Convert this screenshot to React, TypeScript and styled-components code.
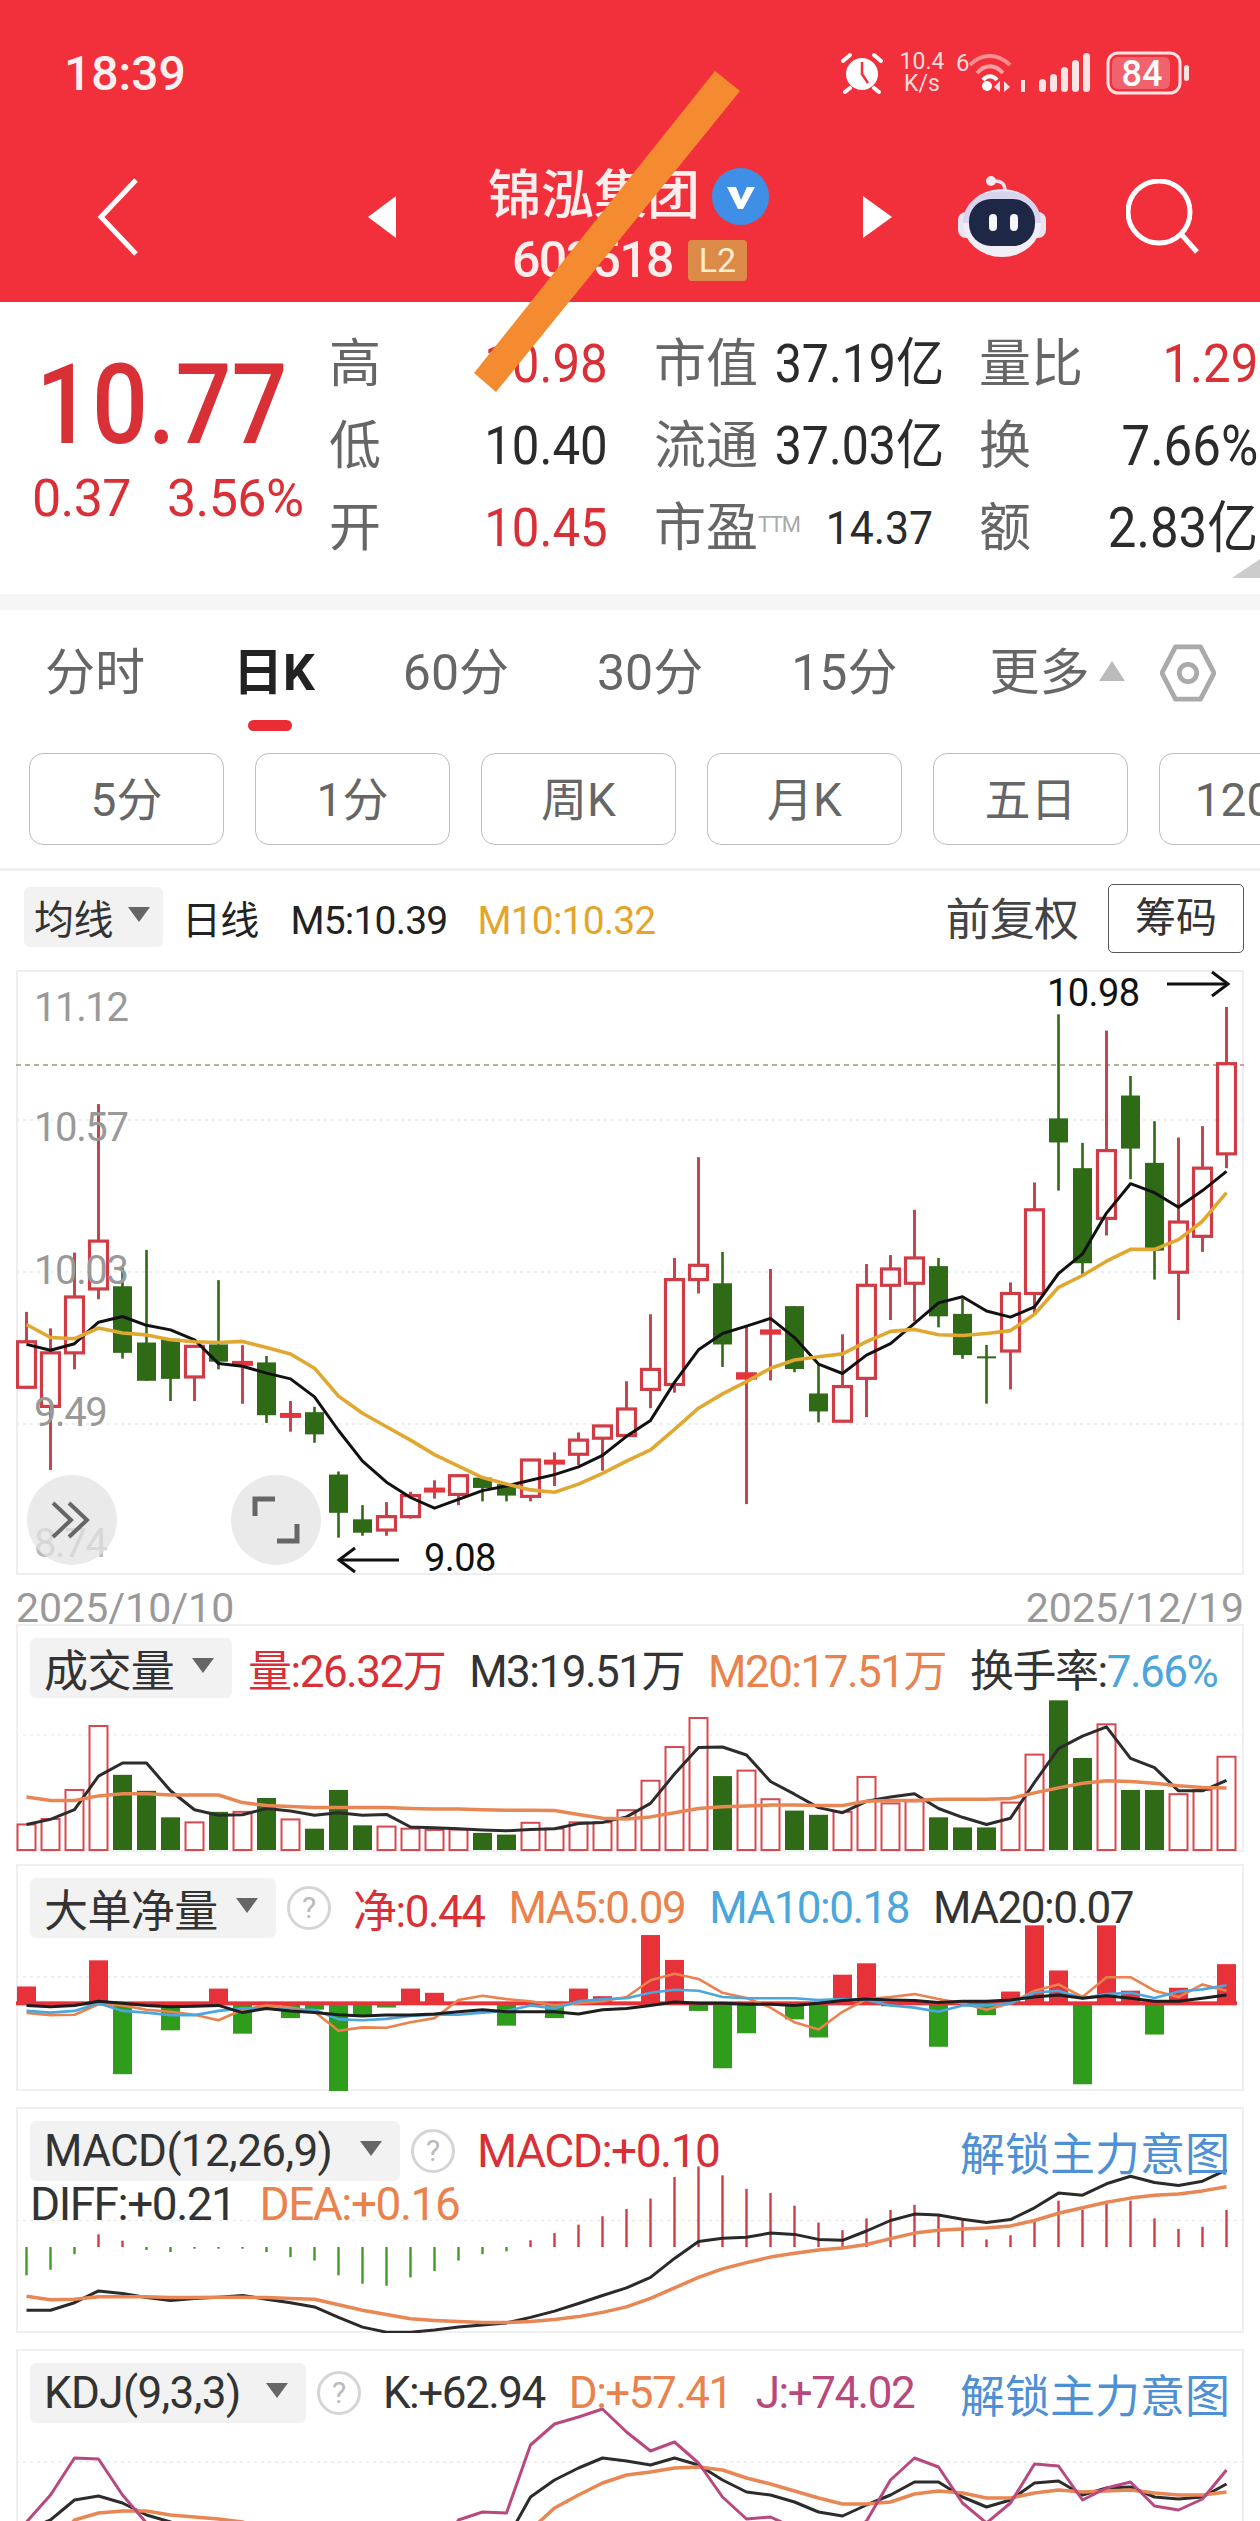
import React from "react";
import styled, { createGlobalStyle } from "styled-components";

const GlobalStyle = createGlobalStyle`
  html, body { margin: 0; padding: 0; background: #fff; }
  body { font-family: Roboto, "Noto Sans CJK SC", sans-serif; }
`;

const RED = "#d92f36";
const ORANGE = "#e9824c";
const BLUE = "#4aa6dc";
const PINK = "#b9487f";
const CANDLE_RED = "#d03c45";
const WICK_RED = "#c4454d";
const GREEN = "#2f6a17";

const colX = (i: number) => 26.5 + 24 * i;

type Kind = "up" | "flat" | "down";
type Candle = [number, number, number, number, Kind];

// sampled from the picture, left part and right part were read at different scales
const leftY = (v: number) => 1000 + v / 2.613;
const rightY = (v: number) => 960 + v / 2.45;
const volY = (v: number) => 1210 + v / 2.376;
const lowY = (v: number) => 1860 + v / 2.372;

const candlesLeft: Candle[] = [
  [893, 1012, 815, 1015, "up"],
  [922, 1062, 858, 1228, "up"],
  [776, 922, 660, 965, "up"],
  [630, 755, 272, 782, "up"],
  [748, 922, 700, 937, "down"],
  [895, 995, 653, 995, "down"],
  [885, 990, 885, 1048, "down"],
  [905, 985, 905, 1048, "up"],
  [900, 945, 732, 965, "down"],
  [943, 951, 902, 1055, "flat"],
  [947, 1085, 930, 1105, "down"],
  [1079, 1087, 1048, 1128, "flat"],
  [1077, 1135, 1063, 1157, "down"],
  [1240, 1340, 1232, 1405, "down"],
  [1357, 1392, 1320, 1400, "down"],
  [1350, 1385, 1312, 1400, "up"],
  [1295, 1350, 1285, 1355, "up"],
  [1274, 1282, 1255, 1303, "flat"],
  [1243, 1292, 1240, 1320, "up"],
  [1248, 1275, 1248, 1310, "down"],
  [1265, 1295, 1262, 1310, "down"],
  [1202, 1297, 1200, 1310, "up"],
  [1201, 1209, 1182, 1270, "flat"],
  [1150, 1187, 1130, 1215, "up"],
  [1113, 1145, 1113, 1230, "up"],
];

const candlesRight: Candle[] = [
  [1100, 1165, 1032, 1170, "up"],
  [1003, 1052, 868, 1098, "up"],
  [783, 1040, 730, 1060, "up"],
  [748, 783, 483, 817, "up"],
  [792, 942, 715, 997, "down"],
  [1010, 1028, 895, 1333, "flat"],
  [905, 918, 757, 1030, "flat"],
  [848, 1002, 848, 1010, "down"],
  [1062, 1106, 990, 1133, "down"],
  [1045, 1130, 917, 1130, "up"],
  [797, 1025, 745, 1120, "up"],
  [757, 797, 723, 882, "up"],
  [730, 792, 612, 885, "up"],
  [750, 873, 730, 900, "down"],
  [867, 968, 830, 977, "down"],
  [971, 976, 943, 1087, "down"],
  [817, 958, 790, 1052, "up"],
  [612, 817, 545, 865, "up"],
  [388, 447, 133, 565, "down"],
  [510, 743, 448, 770, "down"],
  [467, 633, 173, 675, "up"],
  [332, 462, 284, 537, "down"],
  [497, 712, 395, 783, "down"],
  [642, 765, 435, 882, "up"],
  [510, 677, 407, 715, "up"],
  [254, 475, 115, 510, "up"],
];

const candles: Candle[] = [
  ...candlesLeft.map((c) => [leftY(c[0]), leftY(c[1]), leftY(c[2]), leftY(c[3]), c[4]] as Candle),
  ...candlesRight.map((c) => [rightY(c[0]), rightY(c[1]), rightY(c[2]), rightY(c[3]), c[4]] as Candle),
];

const ma5 = [
  ...[900, 915, 898, 842, 827, 850, 862, 888, 950, 957, 975, 990, 1037, 1125, 1205, 1260, 1300, 1328, 1305, 1282, 1270, 1255, 1240, 1220, 1190, 1140].map(leftY),
  ...[1128, 1035, 955, 915, 897, 878, 925, 990, 1013, 968, 940, 890, 840, 825, 860, 875, 850, 768, 720, 620, 548, 570, 606, 565, 518].map(rightY),
];

const ma10 = [
  ...[848, 882, 885, 857, 870, 875, 888, 893, 895, 892, 908, 925, 962, 1035, 1080, 1115, 1150, 1188, 1218, 1248, 1265, 1280, 1286, 1265, 1237, 1205].map(leftY),
  ...[1200, 1150, 1098, 1063, 1033, 1000, 980, 972, 965, 935, 910, 905, 918, 920, 915, 908, 868, 802, 773, 738, 709, 709, 685, 640, 570].map(rightY),
];

const volumes = [1460, 1447, 1378, 1226, 1342, 1380, 1443, 1455, 1430, 1430, 1397, 1448, 1470, 1378, 1462, 1465, 1470, 1473, 1472, 1480, 1484, 1456, 1470, 1455, 1455, 1426, 1356, 1276, 1207, 1345, 1332, 1400, 1427, 1437, 1430, 1347, 1410, 1405, 1443, 1467, 1467, 1408, 1294, 1165, 1302, 1222, 1378, 1378, 1388, 1378, 1299].map(volY);
const volM3 = [1460, 1448, 1425, 1345, 1314, 1314, 1380, 1425, 1438, 1437, 1422, 1428, 1438, 1432, 1438, 1436, 1466, 1468, 1470, 1473, 1475, 1472, 1470, 1458, 1455, 1442, 1410, 1340, 1277, 1276, 1295, 1358, 1388, 1420, 1432, 1405, 1395, 1387, 1422, 1443, 1460, 1445, 1360, 1280, 1250, 1228, 1303, 1325, 1380, 1380, 1355].map(volY);
const volM20 = [1395, 1403, 1403, 1392, 1387, 1387, 1390, 1390, 1390, 1408, 1415, 1417, 1420, 1420, 1420, 1420, 1422, 1423, 1423, 1425, 1426, 1426, 1427, 1436, 1445, 1447, 1442, 1432, 1422, 1418, 1416, 1414, 1414, 1415, 1415, 1405, 1403, 1403, 1400, 1400, 1400, 1398, 1385, 1373, 1362, 1356, 1358, 1362, 1368, 1372, 1373].map(volY);

const BIG_BASE = lowY(340);
const bigBars: Record<number, number> = {
  0: 300, 3: 238, 8: 305, 16: 305, 17: 315, 23: 305, 24: 323, 26: 178, 27: 237, 34: 272, 35: 245, 41: 312, 42: 155, 43: 262, 45: 155, 46: 310, 48: 303, 50: 247,
  4: 508, 6: 404, 9: 412, 10: 345, 11: 375, 12: 355, 13: 548, 14: 370, 15: 350, 20: 393, 22: 375, 28: 358, 29: 494, 30: 411, 32: 378, 33: 421, 36: 347, 38: 443, 40: 368, 44: 532, 47: 414,
};
const bigMa5 = [363, 368, 367, 342, 345, 355, 360, 367, 380, 355, 345, 350, 360, 405, 397, 398, 385, 375, 332, 322, 330, 335, 345, 340, 335, 325, 285, 270, 282, 315, 327, 350, 385, 402, 360, 330, 325, 318, 330, 340, 355, 340, 310, 295, 325, 278, 278, 310, 325, 295, 310].map(lowY);
const bigMa10 = [358, 362, 358, 340, 358, 362, 368, 368, 358, 352, 352, 355, 355, 378, 380, 377, 370, 367, 367, 362, 358, 345, 352, 335, 330, 328, 315, 308, 310, 325, 328, 328, 328, 332, 330, 332, 345, 350, 360, 345, 345, 340, 315, 310, 328, 318, 315, 327, 312, 307, 297].map(lowY);
const bigMa20 = [345, 348, 345, 335, 340, 345, 348, 347, 345, 362, 352, 358, 362, 367, 370, 368, 368, 365, 360, 355, 360, 360, 360, 365, 355, 352, 345, 337, 340, 340, 342, 342, 345, 340, 333, 330, 332, 333, 338, 335, 335, 332, 325, 320, 328, 322, 328, 335, 335, 328, 320].map(lowY);

const MACD_BASE = 918;
const macdBars = [985, 972, 935, 888, 903, 925, 930, 922, 922, 922, 930, 942, 950, 985, 1005, 1010, 990, 975, 950, 935, 928, 902, 885, 865, 845, 828, 803, 752, 727, 748, 780, 790, 820, 860, 878, 850, 830, 818, 840, 850, 900, 890, 855, 808, 830, 815, 808, 850, 875, 870, 830];
const diff = [1068, 1068, 1050, 1022, 1028, 1038, 1045, 1040, 1037, 1033, 1042, 1050, 1060, 1085, 1108, 1120, 1120, 1115, 1108, 1103, 1098, 1085, 1070, 1052, 1033, 1015, 990, 945, 905, 897, 895, 885, 888, 900, 902, 880, 855, 840, 842, 852, 860, 853, 825, 790, 795, 768, 750, 765, 772, 762, 735].map(lowY);
const dea = [1035, 1043, 1042, 1036, 1036, 1036, 1038, 1038, 1037, 1037, 1038, 1040, 1042, 1055, 1068, 1078, 1088, 1092, 1095, 1097, 1097, 1095, 1090, 1083, 1073, 1060, 1040, 1015, 990, 970, 955, 942, 933, 925, 920, 912, 898, 885, 878, 875, 873, 868, 855, 838, 825, 812, 802, 795, 792, 785, 775].map(lowY);

// below the fold the lines only have to leave the page, so those values are rough
const kdjK = [2530, 2520, 2500, 2496, 2503, 2515, 2522, 2530, 2540, 2550, 2560, 2570, 2570, 2570, 2570, 2570, 2570, 2570, 2570, 2560, 2540, 2497, 2480, 2468, 2458, 2461, 2465, 2458, 2465, 2480, 2492, 2495, 2502, 2512, 2516, 2505, 2495, 2482, 2482, 2497, 2507, 2500, 2483, 2481, 2495, 2488, 2487, 2497, 2499, 2497, 2484];
const kdjD = [2560, 2550, 2520, 2513, 2511, 2511, 2515, 2517, 2519, 2522, 2530, 2540, 2550, 2560, 2570, 2570, 2570, 2570, 2570, 2570, 2550, 2530, 2508, 2495, 2483, 2475, 2472, 2468, 2467, 2470, 2478, 2484, 2491, 2498, 2504, 2504, 2502, 2494, 2491, 2493, 2498, 2498, 2493, 2490, 2492, 2491, 2490, 2493, 2495, 2495, 2492];
const kdjJ = [2522, 2495, 2458, 2459, 2495, 2523, 2560, 2580, 2590, 2590, 2590, 2590, 2590, 2590, 2590, 2590, 2590, 2560, 2520, 2512, 2513, 2445, 2424, 2417, 2409, 2432, 2451, 2442, 2463, 2497, 2519, 2517, 2528, 2540, 2540, 2521, 2480, 2458, 2467, 2503, 2523, 2503, 2464, 2466, 2500, 2488, 2482, 2506, 2510, 2499, 2470];

const linePoints = (ys: number[]) => ys.map((y, i) => `${colX(i)},${y.toFixed(1)}`).join(" ");

const Page = styled.div`
  position: relative;
  width: 1260px;
  height: 2521px;
  overflow: hidden;
  background: #fff;
  color: #333;
`;

const Stripe = styled.svg`
  position: absolute;
  left: 0;
  top: 0;
  z-index: 5;
`;

const Header = styled.header`
  height: 302px;
  background: #f1303c;
  color: #fff;
`;

const StatusBar = styled.div`
  height: 146px;
  box-sizing: border-box;
  padding: 0 0 0 64px;
  display: flex;
  align-items: center;
`;

const Clock = styled.span`
  font-size: 48px;
  font-weight: 500;
  width: 776px;
  color: #fdf0f0;
`;

const StatusIcon = styled.svg<{ $ml?: number }>`
  flex: none;
  margin-left: ${(p) => p.$ml ?? 0}px;
`;

const Speed = styled.span`
  display: flex;
  flex-direction: column;
  align-items: center;
  width: 52px;
  margin-left: 12px;
  font-size: 23px;
  line-height: 22px;
  color: #fbdcdc;
`;

const NetworkDigit = styled.span`
  width: 12px;
  margin: 0 0 20px 8px;
  font-size: 24px;
  line-height: 24px;
  color: #fbdcdc;
`;

const NavBar = styled.div`
  height: 156px;
  padding-left: 96px;
  display: flex;
  align-items: center;
`;

const NavIcon = styled.svg<{ $ml: number }>`
  margin-left: ${(p) => p.$ml}px;
  margin-bottom: 14px;
  flex: none;
`;

const TitleBlock = styled.div`
  width: 281px;
  margin-left: 94px;
  flex: none;
`;

const TitleRow = styled.div`
  display: flex;
  align-items: center;
  height: 66px;
`;

const StockName = styled.span`
  font-size: 53px;
  font-weight: 500;
  line-height: 66px;
  width: 224px;
  margin-left: -2px;
  color: #fdeeee;
`;

const CodeRow = styled.div`
  display: flex;
  align-items: center;
  margin-top: 6px;
  padding-left: 22px;
`;

const StockCode = styled.span`
  font-size: 50px;
  font-weight: 500;
  letter-spacing: -1.6px;
  line-height: 50px;
  color: #fdeeee;
  width: 176px;
`;

const LevelBadge = styled.span`
  width: 59px;
  height: 41px;
  background: #dc8a48;
  color: #ffeccd;
  border-radius: 4px;
  font-size: 34px;
  line-height: 41px;
  text-align: center;
`;

const Quote = styled.section`
  height: 292px;
  display: flex;
  box-sizing: border-box;
  padding-top: 21px;
`;

const PriceBlock = styled.div`
  width: 330px;
  flex: none;
  padding-left: 32px;
  box-sizing: border-box;
`;

const Price = styled.div`
  font-size: 112px;
  font-weight: 500;
  line-height: 112px;
  color: ${RED};
  margin: 26px 0 0 4px;
  transform: scaleX(0.88);
  transform-origin: left center;
`;

const PriceChange = styled.div`
  display: flex;
  gap: 36px;
  margin-top: 10px;
  font-size: 52px;
  line-height: 56px;
  letter-spacing: -0.6px;
  color: ${RED};
  white-space: nowrap;
`;

const QuoteGrid = styled.div`
  display: grid;
  grid-template-columns: repeat(3, 278px);
  grid-auto-rows: 82px;
  column-gap: 47px;
`;

const QuoteCell = styled.div`
  display: flex;
  align-items: center;
  justify-content: space-between;
  white-space: nowrap;
`;

const QuoteLabel = styled.span`
  font-size: 52px;
  line-height: 60px;
  margin: 2px 0 0 -1px;
  color: #666;
  display: inline-flex;
  align-items: flex-start;
`;

const Ttm = styled.span`
  font-size: 22px;
  line-height: 28px;
  margin-top: 12px;
  color: #aaa;
  letter-spacing: -1.4px;
`;

const QuoteValue = styled.span<{ $red?: boolean; $size?: number; $mr?: number }>`
  display: inline-block;
  font-size: ${(p) => p.$size ?? 54}px;
  line-height: 60px;
  margin-right: ${(p) => p.$mr ?? 0}px;
  transform: scaleX(0.91);
  transform-origin: right center;
  color: ${(p) => (p.$red ? RED : "#2b2b2b")};
`;

const Corner = styled.div`
  position: absolute;
  right: 0;
  top: 559px;
  width: 0;
  height: 0;
  border-left: 28px solid transparent;
  border-bottom: 19px solid #ccc;
`;

const Band = styled.div`
  height: 16px;
  background: #f5f5f5;
`;

const TabRow = styled.nav`
  position: relative;
  height: 143px;
  box-sizing: border-box;
  padding: 36px 0 0 45px;
  display: flex;
  align-items: flex-start;
  gap: 88px;
`;

const Tab = styled.span<{ $active?: boolean; $ml?: number }>`
  position: relative;
  font-size: 50px;
  line-height: 54px;
  white-space: nowrap;
  color: ${(p) => (p.$active ? "#222" : "#666")};
  font-weight: ${(p) => (p.$active ? 700 : 400)};
  margin-left: ${(p) => p.$ml ?? 0}px;
  display: flex;
  align-items: center;
`;

const TabMark = styled.i`
  position: absolute;
  left: 15px;
  top: 74px;
  width: 44px;
  height: 11px;
  border-radius: 6px;
  background: #ea2c35;
`;

const TabArrow = styled.i`
  width: 0;
  height: 0;
  margin: 0 0 4px 10px;
  border-left: 13px solid transparent;
  border-right: 13px solid transparent;
  border-bottom: 20px solid #bbb;
`;

const SettingsIcon = styled.svg`
  flex: none;
  margin: -3px 0 0 -53px;
`;

const PeriodRow = styled.div`
  height: 115px;
  padding-left: 29px;
  display: flex;
  gap: 31px;
  overflow: hidden;
  border-bottom: 3px solid #efefef;
`;

const PeriodButton = styled.span`
  flex: none;
  width: 195px;
  height: 92px;
  box-sizing: border-box;
  border: 1px solid #bdbdbd;
  border-radius: 14px;
  font-size: 46px;
  line-height: 92px;
  text-align: center;
  color: #666;
`;

const ChartHead = styled.div`
  height: 99px;
  box-sizing: border-box;
  padding: 16px 16px 0 24px;
  display: flex;
  align-items: flex-start;
`;

const HeadText = styled.span<{ $color?: string; $size?: number; $ml?: number }>`
  font-size: ${(p) => p.$size ?? 39}px;
  line-height: 68px;
  letter-spacing: -0.8px;
  color: ${(p) => p.$color ?? "#222"};
  margin-left: ${(p) => p.$ml ?? 0}px;
  white-space: nowrap;
`;

const Pill = styled.span<{ $w: number; $compact?: boolean }>`
  flex: none;
  box-sizing: border-box;
  width: ${(p) => p.$w}px;
  height: 60px;
  padding-left: ${(p) => (p.$compact ? 10 : 14)}px;
  padding-right: ${(p) => (p.$compact ? 13 : 18)}px;
  border-radius: 6px;
  background: #f2f2f2;
  display: flex;
  align-items: center;
  justify-content: space-between;
  font-size: ${(p) => (p.$compact ? 40 : 44)}px;
  letter-spacing: -0.6px;
  color: #333;
  white-space: nowrap;
`;

const PillArrow = styled.i`
  flex: none;
  width: 0;
  height: 0;
  margin-bottom: 6px;
  border-left: 11px solid transparent;
  border-right: 11px solid transparent;
  border-top: 15px solid #666;
`;

const ChipButton = styled.span`
  margin-left: auto;
  margin-top: -3px;
  width: 136px;
  height: 69px;
  box-sizing: border-box;
  border: 1px solid #555;
  border-radius: 5px;
  font-size: 41px;
  line-height: 66px;
  text-align: center;
  color: #333;
`;

const PricePanel = styled.section`
  position: relative;
  width: 1228px;
  height: 605px;
  margin-left: 16px;
  box-sizing: border-box;
  border: 2px solid #eeeeee;
`;

const PanelChart = styled.svg`
  position: absolute;
  left: -2px;
  top: -2px;
  overflow: hidden;
`;

const AxisLabel = styled.span<{ $top: number; $faded?: boolean }>`
  position: absolute;
  left: 16px;
  top: ${(p) => p.$top}px;
  font-size: 40px;
  line-height: 46px;
  letter-spacing: -1.4px;
  color: ${(p) => (p.$faded ? "#bbb" : "#999")};
`;

const Note = styled.span<{ $left: number; $top: number }>`
  position: absolute;
  left: ${(p) => p.$left}px;
  top: ${(p) => p.$top}px;
  font-size: 38px;
  line-height: 42px;
  letter-spacing: -0.6px;
  color: #111;
`;

const RoundButton = styled.span<{ $left: number }>`
  position: absolute;
  left: ${(p) => p.$left}px;
  top: 503px;
  width: 90px;
  height: 90px;
  border-radius: 50%;
  background: rgba(226, 226, 226, 0.72);
  display: flex;
  align-items: center;
  justify-content: center;
`;

const DateRow = styled.div`
  height: 49px;
  box-sizing: border-box;
  padding-top: 16px;
  width: 1228px;
  margin-left: 16px;
  display: flex;
  justify-content: space-between;
  align-items: center;
  font-size: 41px;
  color: #999;
`;

const Panel = styled.section<{ $h: number; $mb?: number }>`
  position: relative;
  width: 1228px;
  height: ${(p) => p.$h}px;
  margin: 0 0 ${(p) => p.$mb ?? 16}px 16px;
  box-sizing: border-box;
  border: 2px solid #f0f0f0;
  padding: 12px 12px 0 12px;
`;

const Legend = styled.div`
  position: relative;
  display: flex;
  align-items: center;
  height: 60px;
  gap: 24px;
`;

const LegendItem = styled.span<{ $color?: string; $size?: number; $ml?: number }>`
  font-size: ${(p) => p.$size ?? 44}px;
  letter-spacing: -1.5px;
  color: ${(p) => p.$color ?? "#333"};
  margin-left: ${(p) => p.$ml ?? 0}px;
  white-space: nowrap;
`;

const Rate = styled.span`
  color: ${BLUE};
`;

const LegendLink = styled.span`
  margin-left: auto;
  font-size: 45px;
  color: #4d90d6;
  white-space: nowrap;
`;

const Help = styled.span`
  flex: none;
  width: 44px;
  height: 44px;
  box-sizing: border-box;
  margin-left: -13px;
  margin-right: -2px;
  border: 3px solid #d5d5d5;
  border-radius: 50%;
  font-size: 30px;
  line-height: 38px;
  text-align: center;
  color: #bbb;
`;

const SubLegend = styled.div`
  position: relative;
  display: flex;
  gap: 24px;
  margin-top: 1px;
  height: 44px;
  line-height: 44px;
`;

const AlarmIcon = () => (
  <StatusIcon width="44" height="42" viewBox="0 0 44 42">
    <circle cx="22" cy="22" r="16" fill="#fff" />
    <path d="M22 10v12l6 9" stroke="#f1303c" strokeWidth="2.5" fill="none" />
    <path d="M3 9l7-6M41 9l-7-6" stroke="#fff" strokeWidth="4" strokeLinecap="round" />
    <path d="M10 36l-5 4M34 36l5 4" stroke="#fff" strokeWidth="4" strokeLinecap="round" />
  </StatusIcon>
);

const WifiIcon = () => (
  <StatusIcon width="44" height="40" viewBox="0 0 44 40">
    <path d="M2 12C13 0 30 0 42 12" stroke="#ff8e90" strokeWidth="4" fill="none" />
    <path d="M9 20C17 11 27 11 35 20" stroke="#ff9ea0" strokeWidth="4" fill="none" />
    <path d="M15 27C19 22 25 22 29 27" stroke="#fff" strokeWidth="4" fill="none" />
    <circle cx="19" cy="33" r="5" fill="#fff" />
    <path d="M32 28l-6 6 6 5zM36 28l6 6-6 5z" fill="#fde0e0" />
  </StatusIcon>
);

const SignalIcon = () => (
  <StatusIcon $ml={6} width="72" height="42" viewBox="0 0 72 42">
    <rect x="3" y="28" width="4" height="12" fill="#fbe4e4" />
    <rect x="21" y="27" width="7" height="13" rx="3.5" fill="#fbe4e4" />
    <rect x="32" y="22" width="7" height="18" rx="3.5" fill="#fbe4e4" />
    <rect x="43" y="15" width="7" height="25" rx="3.5" fill="#fbe4e4" />
    <rect x="54" y="8" width="7" height="32" rx="3.5" fill="#fbe4e4" />
    <rect x="65" y="1" width="7" height="39" rx="3.5" fill="#fbe4e4" />
  </StatusIcon>
);

const BatteryIcon = () => (
  <StatusIcon $ml={16} width="84" height="44" viewBox="0 0 84 44">
    <rect x="2" y="2" width="72" height="40" rx="10" fill="none" stroke="#fde2e2" strokeWidth="3" />
    <rect x="6" y="6" width="58" height="32" rx="6" fill="#f0626c" />
    <rect x="78" y="14" width="5" height="16" rx="2.5" fill="#fde2e2" />
    <text x="36" y="35" textAnchor="middle" fontSize="36" fontWeight="500" fill="#fff" fontFamily="Roboto, sans-serif">84</text>
  </StatusIcon>
);

const RobotIcon = () => (
  <NavIcon $ml={66} width="88" height="82" viewBox="0 0 88 82">
    <path d="M47 15c0-7-3-10-10-10" stroke="#ecdfee" strokeWidth="3.5" fill="none" />
    <circle cx="33" cy="5" r="5" fill="#f3e9f2" />
    <rect x="0" y="36" width="88" height="26" rx="8" fill="#e9e4f4" />
    <ellipse cx="44" cy="47" rx="39" ry="34" fill="#f2eef8" />
    <path d="M5 47C5 28 20 15 44 15s39 13 39 32" fill="#d8d4ee" />
    <rect x="11" y="23" width="66" height="47" rx="22" fill="#1f2747" />
    <rect x="31" y="38" width="8" height="17" rx="4" fill="#f6f6fb" />
    <rect x="52" y="38" width="8" height="17" rx="4" fill="#f6f6fb" />
  </NavIcon>
);

const CandleShape = ({ c, i }: { c: Candle; i: number }) => {
  const [top, bottom, wickTop, wickBottom, kind] = c;
  const x = colX(i);
  if (kind === "down") {
    return (
      <g>
        <line x1={x} x2={x} y1={wickTop} y2={wickBottom} stroke={GREEN} strokeWidth="2.6" />
        <rect x={x - 9.5} y={top} width="19" height={bottom - top} fill={GREEN} />
      </g>
    );
  }
  if (kind === "flat") {
    return (
      <g>
        <line x1={x} x2={x} y1={wickTop} y2={wickBottom} stroke={WICK_RED} strokeWidth="3" />
        <rect x={x - 10.5} y={top} width="21" height={Math.max(bottom - top, 5)} fill="#e4343c" />
      </g>
    );
  }
  return (
    <g>
      <line x1={x} x2={x} y1={wickTop} y2={top} stroke={WICK_RED} strokeWidth="3" />
      <line x1={x} x2={x} y1={bottom} y2={wickBottom} stroke={WICK_RED} strokeWidth="3" />
      <rect x={x - 9} y={top} width="18" height={bottom - top} fill="#fff" fillOpacity="0.6" stroke={CANDLE_RED} strokeWidth="3.2" />
    </g>
  );
};

const Series = ({ ys, color, width = 2.6 }: { ys: number[]; color: string; width?: number }) => (
  <polyline points={linePoints(ys)} fill="none" stroke={color} strokeWidth={width} strokeLinejoin="round" />
);

const GridLine = ({ y, from = 16, to = 1244, dark }: { y: number; from?: number; to?: number; dark?: boolean }) => (
  <line
    x1={from}
    x2={to}
    y1={y}
    y2={y}
    stroke={dark ? "#b3b09c" : "#e9e9e9"}
    strokeWidth={dark ? 2 : 1.5}
    strokeDasharray={dark ? "5 4" : "3 4"}
  />
);

const ViewChart = ({ top, h, children }: { top: number; h: number; children: React.ReactNode }) => (
  <PanelChart width="1228" height={h} viewBox={`16 ${top} 1228 ${h}`}>
    {children}
  </PanelChart>
);

const arrowHead = "M-16 -12L0 0L-16 12";

const CandleChart = () => (
  <ViewChart top={970} h={605}>
    <GridLine y={1065} dark />
    <GridLine y={1120} />
    <GridLine y={1272} />
    <GridLine y={1424} />
    {candles.map((c, i) => (
      <CandleShape key={i} c={c} i={i} />
    ))}
    <Series ys={ma5} color="#111" width={3} />
    <Series ys={ma10} color="#e0a830" width={3.6} />
    <line x1="1167" x2="1226" y1="984" y2="984" stroke="#111" strokeWidth="3" />
    <path d={arrowHead} transform="translate(1228 984)" fill="none" stroke="#111" strokeWidth="3" />
    <line x1="341" x2="399" y1="1560" y2="1560" stroke="#111" strokeWidth="3" />
    <path d={arrowHead} transform="translate(339 1560) rotate(180)" fill="none" stroke="#111" strokeWidth="3" />
  </ViewChart>
);

const VolumeChart = () => (
  <ViewChart top={1624} h={228}>
    <line x1="16" x2="1244" y1="1735" y2="1735" stroke="#efefef" strokeWidth="1.5" strokeDasharray="3 4" />
    {volumes.map((y, i) =>
      candles[i][4] === "down" ? (
        <rect key={i} x={colX(i) - 9.5} y={y} width="19" height={1850 - y} fill={GREEN} />
      ) : (
        <rect key={i} x={colX(i) - 9} y={y} width="18" height={1850 - y} fill="#fff" stroke="#d8484f" strokeWidth="2" />
      )
    )}
    <Series ys={volM3} color="#2c2c2c" width={3} />
    <Series ys={volM20} color="#e88654" width={3.5} />
  </ViewChart>
);

const BigOrderChart = () => (
  <ViewChart top={1864} h={227}>
    <GridLine y={1977} />
    {Object.entries(bigBars).map(([i, raw]) => {
      const y = lowY(raw);
      const up = y < BIG_BASE;
      return (
        <rect
          key={i}
          x={colX(Number(i)) - 9.5}
          y={up ? y : BIG_BASE}
          width="19"
          height={Math.abs(y - BIG_BASE)}
          fill={up ? "#e8323a" : "#2f9c1c"}
        />
      );
    })}
    <rect x="16" y={BIG_BASE - 2} width="1221" height="4" fill="#e8323a" />
    <Series ys={bigMa5} color={ORANGE} />
    <Series ys={bigMa10} color={BLUE} />
    <Series ys={bigMa20} color="#1e1e1e" width={3} />
  </ViewChart>
);

const MacdChart = () => (
  <ViewChart top={2107} h={226}>
    <GridLine y={lowY(855)} />
    {macdBars.map((raw, i) => (
      <line
        key={i}
        x1={colX(i)}
        x2={colX(i)}
        y1={lowY(MACD_BASE)}
        y2={lowY(raw)}
        stroke={raw < MACD_BASE ? "#d23c44" : "#3f9a24"}
        strokeWidth="2.4"
      />
    ))}
    <Series ys={diff} color="#2a2a2a" width={3} />
    <Series ys={dea} color="#e88654" width={3.5} />
  </ViewChart>
);

const KdjChart = () => (
  <ViewChart top={2349} h={172}>
    <GridLine y={2462} />
    <Series ys={kdjK} color="#2c2c2c" width={3} />
    <Series ys={kdjD} color="#e88654" width={3.5} />
    <Series ys={kdjJ} color={PINK} width={3} />
  </ViewChart>
);

const App = () => (
  <Page>
    <GlobalStyle />
    <Header>
      <StatusBar>
        <Clock>18:39</Clock>
        <AlarmIcon />
        <Speed>
          <span>10.4</span>
          <span>K/s</span>
        </Speed>
        <NetworkDigit>6</NetworkDigit>
        <WifiIcon />
        <SignalIcon />
        <BatteryIcon />
      </StatusBar>
      <NavBar>
        <NavIcon $ml={0} width="44" height="78" viewBox="0 0 44 78">
          <path d="M40 2L5 39l35 37" fill="none" stroke="#fff" strokeWidth="5" />
        </NavIcon>
        <NavIcon $ml={228} width="28" height="42" viewBox="0 0 28 42">
          <path d="M28 0v42L0 21z" fill="#fff" />
        </NavIcon>
        <TitleBlock>
          <TitleRow>
            <StockName>锦泓集团</StockName>
            <svg width="57" height="57" viewBox="0 0 57 57">
              <circle cx="28.5" cy="28.5" r="28.5" fill="#3f8fe6" />
              <path d="M15 19h9l5 13 6-13h8L31 41h-5z" fill="#fff" />
            </svg>
          </TitleRow>
          <CodeRow>
            <StockCode>603518</StockCode>
            <LevelBadge>L2</LevelBadge>
          </CodeRow>
        </TitleBlock>
        <NavIcon $ml={92} width="29" height="42" viewBox="0 0 29 42">
          <path d="M0 0v42l29-21z" fill="#fff" />
        </NavIcon>
        <RobotIcon />
        <NavIcon $ml={80} width="74" height="76" viewBox="0 0 74 76">
          <circle cx="33" cy="33" r="31" fill="none" stroke="#fff" strokeWidth="5" />
          <path d="M55 55l16 18" stroke="#fff" strokeWidth="5" />
        </NavIcon>
      </NavBar>
    </Header>

    <Quote>
      <PriceBlock>
        <Price>10.77</Price>
        <PriceChange>
          <span>0.37</span>
          <span>3.56%</span>
        </PriceChange>
      </PriceBlock>
      <QuoteGrid>
        <QuoteCell>
          <QuoteLabel>高</QuoteLabel>
          <QuoteValue $red>10.98</QuoteValue>
        </QuoteCell>
        <QuoteCell>
          <QuoteLabel>市值</QuoteLabel>
          <QuoteValue $size={53} $mr={4}>37.19亿</QuoteValue>
        </QuoteCell>
        <QuoteCell>
          <QuoteLabel>量比</QuoteLabel>
          <QuoteValue $red>1.29</QuoteValue>
        </QuoteCell>
        <QuoteCell>
          <QuoteLabel>低</QuoteLabel>
          <QuoteValue>10.40</QuoteValue>
        </QuoteCell>
        <QuoteCell>
          <QuoteLabel>流通</QuoteLabel>
          <QuoteValue $size={53} $mr={4}>37.03亿</QuoteValue>
        </QuoteCell>
        <QuoteCell>
          <QuoteLabel>换</QuoteLabel>
          <QuoteValue $size={56}>7.66%</QuoteValue>
        </QuoteCell>
        <QuoteCell>
          <QuoteLabel>开</QuoteLabel>
          <QuoteValue $red>10.45</QuoteValue>
        </QuoteCell>
        <QuoteCell>
          <QuoteLabel>
            市盈<Ttm>TTM</Ttm>
          </QuoteLabel>
          <QuoteValue $size={47}>14.37</QuoteValue>
        </QuoteCell>
        <QuoteCell>
          <QuoteLabel>额</QuoteLabel>
          <QuoteValue $size={56}>2.83亿</QuoteValue>
        </QuoteCell>
      </QuoteGrid>
      <Corner />
    </Quote>
    <Band />

    <TabRow>
      <Tab>分时</Tab>
      <Tab $active>
        日K
        <TabMark />
      </Tab>
      <Tab>60分</Tab>
      <Tab>30分</Tab>
      <Tab>15分</Tab>
      <Tab $ml={4}>
        更多
        <TabArrow />
      </Tab>
      <SettingsIcon width="56" height="60" viewBox="0 0 58 62">
        <path d="M16 4h26l14 27-14 27H16L2 31z" fill="none" stroke="#aaa" strokeWidth="5" strokeLinejoin="round" />
        <circle cx="29" cy="31" r="9" fill="none" stroke="#aaa" strokeWidth="5" />
      </SettingsIcon>
    </TabRow>

    <PeriodRow>
      {["5分", "1分", "周K", "月K", "五日", "120分"].map((label) => (
        <PeriodButton key={label}>{label}</PeriodButton>
      ))}
    </PeriodRow>

    <ChartHead>
      <Pill $w={139} $compact>
        均线
        <PillArrow />
      </Pill>
      <HeadText $ml={19}>日线</HeadText>
      <HeadText $ml={32}>M5:10.39</HeadText>
      <HeadText $ml={30} $color="#e3a52a">
        M10:10.32
      </HeadText>
      <HeadText $ml={290} $size={45} $color="#444">
        前复权
      </HeadText>
      <ChipButton>筹码</ChipButton>
    </ChartHead>

    <PricePanel>
      <CandleChart />
      <AxisLabel $top={13}>11.12</AxisLabel>
      <AxisLabel $top={133}>10.57</AxisLabel>
      <AxisLabel $top={276}>10.03</AxisLabel>
      <AxisLabel $top={418}>9.49</AxisLabel>
      <AxisLabel $top={549} $faded>
        8.74
      </AxisLabel>
      <Note $left={1029} $top={0}>
        10.98
      </Note>
      <Note $left={406} $top={565}>
        9.08
      </Note>
      <RoundButton $left={9}>
        <svg width="50" height="50" viewBox="0 0 50 50">
          <path d="M6 8l18 17L6 42M22 8l18 17-18 17" fill="none" stroke="#666" strokeWidth="4" />
        </svg>
      </RoundButton>
      <RoundButton $left={213}>
        <svg width="50" height="50" viewBox="0 0 50 50">
          <path d="M4 21V4h20M46 29v17H26" fill="none" stroke="#666" strokeWidth="5" />
        </svg>
      </RoundButton>
    </PricePanel>

    <DateRow>
      <span>2025/10/10</span>
      <span>2025/12/19</span>
    </DateRow>

    <Panel $h={228} $mb={12}>
      <VolumeChart />
      <Legend>
        <Pill $w={202}>
          成交量
          <PillArrow />
        </Pill>
        <LegendItem $color={RED} $ml={-8}>量:26.32万</LegendItem>
        <LegendItem>M3:19.51万</LegendItem>
        <LegendItem $color={ORANGE}>M20:17.51万</LegendItem>
        <LegendItem>
          换手率:<Rate>7.66%</Rate>
        </LegendItem>
      </Legend>
    </Panel>

    <Panel $h={227}>
      <BigOrderChart />
      <Legend>
        <Pill $w={246}>
          大单净量
          <PillArrow />
        </Pill>
        <Help>?</Help>
        <LegendItem $color={RED}>净:0.44</LegendItem>
        <LegendItem $color={ORANGE}>MA5:0.09</LegendItem>
        <LegendItem $color={BLUE}>MA10:0.18</LegendItem>
        <LegendItem>MA20:0.07</LegendItem>
      </Legend>
    </Panel>

    <Panel $h={226}>
      <MacdChart />
      <Legend>
        <Pill $w={370}>
          MACD(12,26,9)
          <PillArrow />
        </Pill>
        <Help>?</Help>
        <LegendItem $size={46} $color={RED}>MACD:+0.10</LegendItem>
        <LegendLink>解锁主力意图</LegendLink>
      </Legend>
      <SubLegend>
        <LegendItem $size={46}>DIFF:+0.21</LegendItem>
        <LegendItem $size={46} $color={ORANGE}>DEA:+0.16</LegendItem>
      </SubLegend>
    </Panel>

    <Panel $h={240}>
      <KdjChart />
      <Legend>
        <Pill $w={276}>
          KDJ(9,3,3)
          <PillArrow />
        </Pill>
        <Help>?</Help>
        <LegendItem>K:+62.94</LegendItem>
        <LegendItem $color={ORANGE}>D:+57.41</LegendItem>
        <LegendItem $color={PINK}>J:+74.02</LegendItem>
        <LegendLink>解锁主力意图</LegendLink>
      </Legend>
    </Panel>

    <Stripe width="1260" height="420" viewBox="0 0 1260 420">
      <path d="M715 71L740 91 496 392 474 373z" fill="#f58b30" />
    </Stripe>
  </Page>
);

export default App;
